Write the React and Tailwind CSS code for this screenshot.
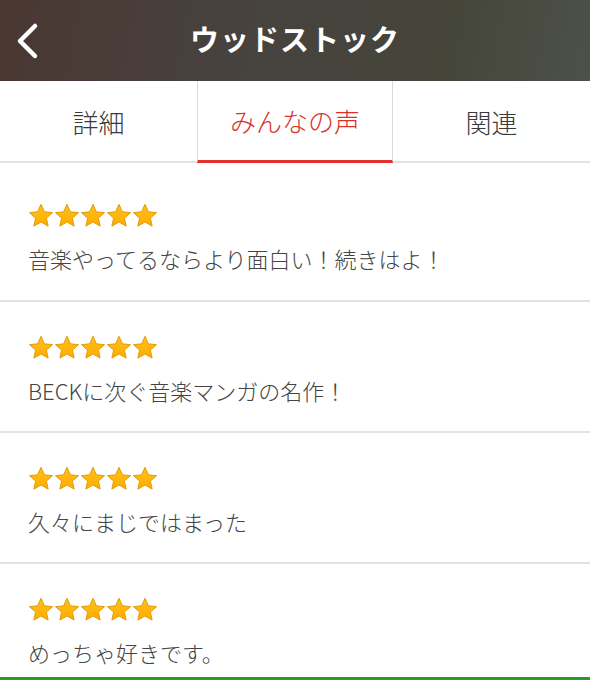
const REVIEWS = [
  '音楽やってるならより面白い！続きはよ！',
  'BECKに次ぐ音楽マンガの名作！',
  '久々にまじではまった',
  'めっちゃ好きです。'
]

const TABS = ['詳細', 'みんなの声', '関連']

function Star() {
  return (
    <svg width="26" height="25" viewBox="0 0 24 23">
      <defs>
        <linearGradient id="starFill" x1="0" y1="0" x2="0" y2="1">
          <stop offset="0" stopColor="#ffc21a" />
          <stop offset="1" stopColor="#ffab00" />
        </linearGradient>
      </defs>
      <path
        d="M12 1.2l3.1 6.9 7.5.8-5.6 5 1.6 7.4L12 17.5l-6.6 3.8 1.6-7.4-5.6-5 7.5-.8z"
        fill="url(#starFill)"
        stroke="#e09a00"
        strokeWidth="0.9"
        strokeLinejoin="round"
      />
    </svg>
  )
}

export default function App() {
  return (
    <div className="w-[590px] h-[680px] overflow-hidden bg-white" style={{ fontFamily: '"Noto Sans CJK JP", "Noto Sans", sans-serif' }}>
      {/* header */}
      <div className="relative h-[81px] flex items-center justify-center bg-[linear-gradient(100deg,#4a3731_0%,#47423f_40%,#45453a_75%,#4d5149_100%)]">
        <svg className="absolute left-[13px] top-[22px]" width="28" height="38" viewBox="0 0 28 38">
          <path d="M22 4L7 19l15 15" fill="none" stroke="#fff" strokeWidth="4.5" strokeLinecap="round" strokeLinejoin="round" />
        </svg>
        <h1 className="text-white text-[29px] font-bold tracking-[1px] mt-[-4px]">ウッドストック</h1>
      </div>

      {/* tabs */}
      <div className="flex h-[82px] border-b-2 border-[#e2e2e2]">
        {TABS.map((t, i) => (
          <div
            key={t}
            className={
              i === 1
                ? 'w-[196px] flex items-center justify-center text-[26px] font-light text-[#d8332b] border-x border-[#dadada] border-b-[3px] border-b-[#e3312b] mb-[-2px]'
                : 'flex-1 flex items-center justify-center text-[26px] font-light text-[#3a3a3a]'
            }
          >
            {t}
          </div>
        ))}
      </div>

      {/* reviews */}
      {REVIEWS.map((r, i) => (
        <div
          key={i}
          className={`px-[28px] border-b-2 border-[#e2e2e2] ${i === 0 ? 'pt-[40px] h-[139px]' : 'pt-[33px] h-[131px]'}`}
        >
          <div className="flex">
            {[0, 1, 2, 3, 4].map(s => (
              <Star key={s} />
            ))}
          </div>
          <p className="mt-[14px] text-[22px] font-light text-[#444] leading-[32px]">{r}</p>
        </div>
      ))}
      <div className="h-[3px] bg-[#2a9a2a] mt-[-18px]" />
    </div>
  )
}
